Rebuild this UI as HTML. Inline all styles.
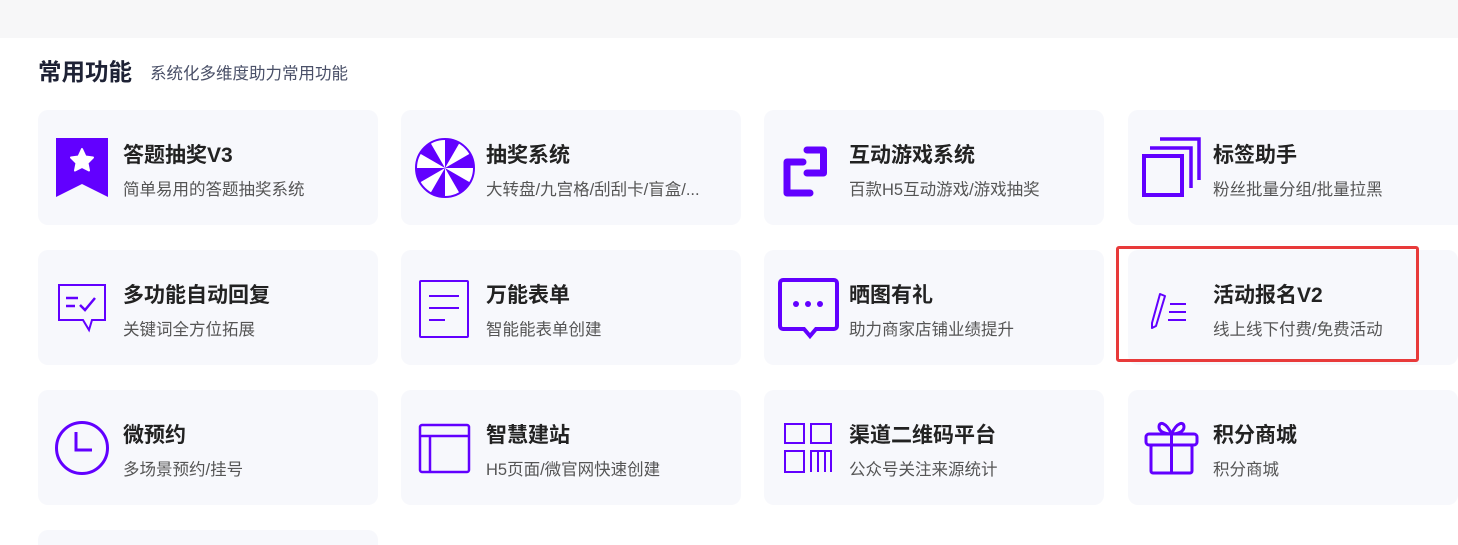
<!DOCTYPE html>
<html><head><meta charset="utf-8"><style>
*{margin:0;padding:0;box-sizing:border-box}
html,body{width:1458px;height:545px;overflow:hidden}
body{background:#fff;position:relative;font-family:"Liberation Sans","Noto Sans CJK SC",sans-serif}
.top{position:absolute;left:0;top:0;width:1458px;height:38px;background:#f7f7f8}
.h{position:absolute;left:38px;top:57px;font-size:23.5px;font-weight:bold;color:#1e2235;line-height:30px}
.hs{position:absolute;left:150px;top:63px;font-size:16.5px;color:#4a5068;line-height:22px}
.c{position:absolute;width:340px;height:115px;background:#f7f8fc;border-radius:10px}
.c svg{position:absolute;left:0;top:0}
.t{position:absolute;left:85px;top:33px;font-size:21px;line-height:26px;font-weight:bold;color:#222;white-space:nowrap}
.s{position:absolute;left:85px;top:69px;font-size:16.5px;line-height:22px;color:#555;white-space:nowrap}
.red{position:absolute;left:1116px;top:246px;width:303px;height:116px;border:3px solid #e83a3a;border-radius:3px}
</style></head><body>
<div class="top"></div>
<div class="h">常用功能</div>
<div class="hs">系统化多维度助力常用功能</div>

<div class="c" style="left:38px;top:110px"><svg width="90" height="115"><path d="M18 28H70V87L44 74L18 87Z" fill="#6200ff"/><path d="M44 39L47.5 46.5L55 47.5L49.5 53L51 60.5L44 57L37 60.5L38.5 53L33 47.5L40.5 46.5Z" fill="#fff" stroke="#fff" stroke-width="2" stroke-linejoin="round"/></svg><div class="t">答题抽奖V3</div><div class="s">简单易用的答题抽奖系统</div></div>

<div class="c" style="left:401px;top:110px"><svg width="90" height="115"><circle cx="44" cy="58" r="29" fill="#fff" stroke="#6200ff" stroke-width="2"/><g fill="#6200ff"><path d="M44 58L44 29A29 29 0 0 1 58.5 32.9Z"/><path d="M44 58L69.1 43.5A29 29 0 0 1 73 58Z"/><path d="M44 58L69.1 72.5A29 29 0 0 1 58.5 83.1Z"/><path d="M44 58L44 87A29 29 0 0 1 29.5 83.1Z"/><path d="M44 58L18.9 72.5A29 29 0 0 1 15 58Z"/><path d="M44 58L18.9 43.5A29 29 0 0 1 29.5 32.9Z"/></g></svg><div class="t">抽奖系统</div><div class="s">大转盘/九宫格/刮刮卡/盲盒/...</div></div>

<div class="c" style="left:764px;top:110px"><svg width="90" height="115"><path d="M43 40H59.5V63H43M39 52H23V83H46" fill="none" stroke="#6200ff" stroke-width="7" stroke-linecap="round" stroke-linejoin="round"/></svg><div class="t">互动游戏系统</div><div class="s">百款H5互动游戏/游戏抽奖</div></div>

<div class="c" style="left:1128px;top:110px;width:330px;border-radius:10px 0 0 10px"><svg width="90" height="115"><rect x="16" y="46" width="38" height="39" fill="none" stroke="#6200ff" stroke-width="4"/><path d="M22 38H63V78M32 29H71V70" fill="none" stroke="#6200ff" stroke-width="3.5"/></svg><div class="t">标签助手</div><div class="s">粉丝批量分组/批量拉黑</div></div>

<div class="c" style="left:38px;top:250px"><svg width="90" height="115"><path d="M21 35H67V70H54L51 80L45 70H21Z" fill="none" stroke="#6200ff" stroke-width="2"/><path d="M28 48H40M28 56H37M42 55L47 60L57 48" fill="none" stroke="#6200ff" stroke-width="2.5"/></svg><div class="t">多功能自动回复</div><div class="s">关键词全方位拓展</div></div>

<div class="c" style="left:401px;top:250px"><svg width="90" height="115"><rect x="19" y="31" width="48" height="56" rx="1" fill="none" stroke="#6200ff" stroke-width="2"/><path d="M28 46H58M28 58H58M28 70H44" stroke="#6200ff" stroke-width="2"/></svg><div class="t">万能表单</div><div class="s">智能能表单创建</div></div>

<div class="c" style="left:764px;top:250px"><svg width="90" height="115"><path d="M19 30H70a3 3 0 0 1 3 3V76a3 3 0 0 1-3 3H52L46 86L40 79H19a3 3 0 0 1-3-3V33a3 3 0 0 1 3-3Z" fill="none" stroke="#6200ff" stroke-width="4"/><circle cx="32" cy="54" r="3" fill="#6200ff"/><circle cx="44" cy="54" r="3" fill="#6200ff"/><circle cx="56" cy="54" r="3" fill="#6200ff"/></svg><div class="t">晒图有礼</div><div class="s">助力商家店铺业绩提升</div></div>

<div class="c" style="left:1128px;top:250px;width:330px"><svg width="90" height="115"><path d="M32 44L37 46L28 76L24 78L24 73Z" fill="none" stroke="#6200ff" stroke-width="2" stroke-linejoin="round"/><path d="M42 54H58M41 62H58M40 70H58" stroke="#6200ff" stroke-width="2"/></svg><div class="t">活动报名V2</div><div class="s">线上线下付费/免费活动</div></div>

<div class="c" style="left:38px;top:390px"><svg width="90" height="115"><circle cx="44" cy="58" r="25.5" fill="none" stroke="#6200ff" stroke-width="3"/><path d="M38 42V60H54" fill="none" stroke="#6200ff" stroke-width="3"/></svg><div class="t">微预约</div><div class="s">多场景预约/挂号</div></div>

<div class="c" style="left:401px;top:390px"><svg width="90" height="115"><rect x="19" y="35" width="49" height="47" rx="2" fill="none" stroke="#6200ff" stroke-width="2.5"/><path d="M19 46H68M29 46V82" stroke="#6200ff" stroke-width="2.5"/></svg><div class="t">智慧建站</div><div class="s">H5页面/微官网快速创建</div></div>

<div class="c" style="left:764px;top:390px"><svg width="90" height="115"><g fill="none" stroke="#6200ff" stroke-width="2"><rect x="21" y="34" width="19" height="19"/><rect x="47" y="34" width="20" height="19"/><rect x="21" y="61" width="19" height="21"/><path d="M47 82V61H67V82M54 61V82M61 61V82"/></g></svg><div class="t">渠道二维码平台</div><div class="s">公众号关注来源统计</div></div>

<div class="c" style="left:1128px;top:390px;width:330px"><svg width="90" height="115"><g fill="none" stroke="#6200ff" stroke-width="3" stroke-linejoin="round"><rect x="18" y="44" width="51" height="11" rx="3"/><rect x="23" y="55" width="41" height="28" rx="2"/><path d="M43.5 44V83M43.5 44C38 44 31 42 31 37C31 31 38 32 43.5 44C49 32 56 31 56 37C56 42 49 44 43.5 44Z"/></g></svg><div class="t">积分商城</div><div class="s">积分商城</div></div>

<div class="c" style="left:38px;top:530px;height:15px;border-radius:10px 10px 0 0"></div>
<div class="red"></div>
</body></html>
